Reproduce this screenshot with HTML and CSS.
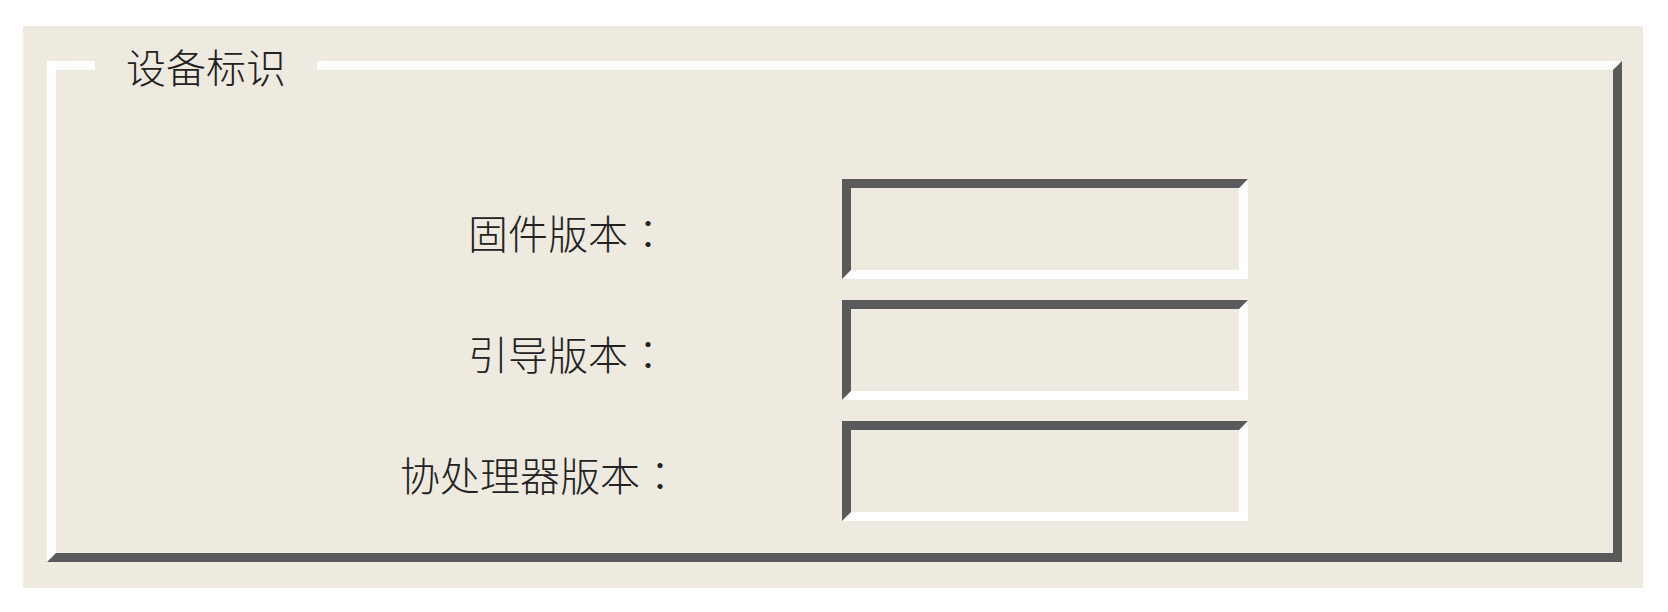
FILE: index.html
```html
<!DOCTYPE html>
<html lang="zh-CN">
<head>
  <meta charset="UTF-8">
  <meta name="viewport" content="width=device-width, initial-scale=1.0">
  <title>设备标识</title>
  <link rel="stylesheet" href="styles.css">
</head>
<body>
  <div class="panel">
    <fieldset class="group">
      <legend>设备标识</legend>

      <div class="form">
        <label class="short" for="fw">固件版本：</label>
        <input type="text" id="fw" readonly>

        <label class="short" for="boot">引导版本：</label>
        <input type="text" id="boot" readonly>

        <label for="cop">协处理器版本：</label>
        <input type="text" id="cop" readonly>
      </div>
    </fieldset>
  </div>
</body>
</html>
```

FILE: styles.css
```css
body {
  margin: 0;
  background: #fff;
  font-family: "Noto Sans CJK TC", "Noto Sans CJK SC", sans-serif;
  color: #222;
}
.panel {
  box-sizing: border-box;
  width: 1620px;
  margin: 26px 0 0 23px;
  padding: 18px 21px 26px 24px;
  background: #eeeadf;
}
.group {
  margin: 0;
  padding: 0 0 32px 0;
  min-inline-size: 0;
  border-style: solid;
  border-width: 9px;
  border-color: #fff #5a5a5c #5a5a5c #fff;
}
.group legend {
  margin-left: 39px;
  padding: 2px 31px 0;
  font-size: 40px;
  line-height: 40px;
  font-weight: 200;
}
.form {
  display: grid;
  grid-template-columns: 624px 406px;
  column-gap: 162px;
  row-gap: 21px;
  align-items: center;
  margin-top: 93px;
}
label {
  text-align: right;
  font-size: 40px;
  line-height: 40px;
  font-weight: 200;
  padding-top: 5px;
  /* keep the full-width colon centred in its cell */
  font-feature-settings: "locl" 0;
}
label.short {
  padding-right: 12px;
}
input[type="text"] {
  box-sizing: border-box;
  width: 406px;
  height: 100px;
  margin: 0;
  padding: 0 10px;
  border-style: solid;
  border-width: 9px;
  border-color: #5a5a5c #fff #fff #5a5a5c;
  background: transparent;
  font: inherit;
  outline: none;
}
```
